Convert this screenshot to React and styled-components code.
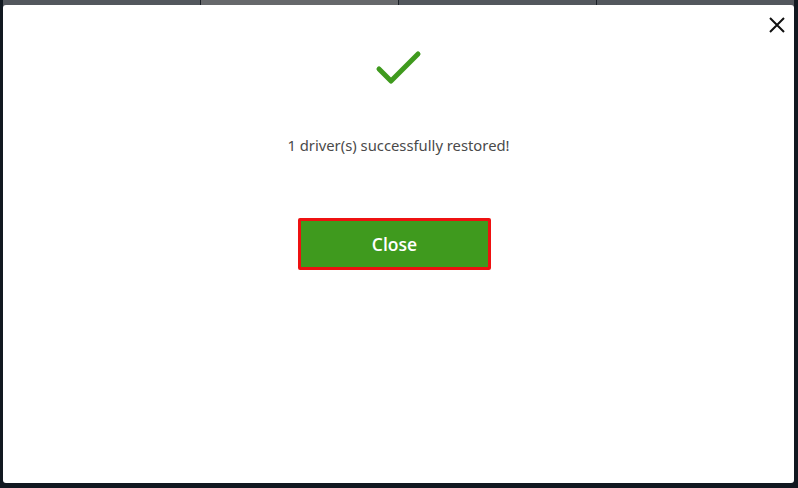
import React from "react";
import styled, { createGlobalStyle } from "styled-components";

const Global = createGlobalStyle`
  html, body { margin: 0; padding: 0; background: #111820; }
  #root { width: 798px; height: 488px; }
`;

const Screen = styled.div`
  width: 798px;
  height: 488px;
  background: #111820;
  display: flex;
  flex-direction: column;
  overflow: hidden;
  padding: 0 4px 5px 3px;
  box-sizing: border-box;
  position: relative;
`;

const TabStrip = styled.div`
  position: absolute;
  top: 0;
  left: 3px;
  right: 4px;
  height: 8px;
  display: flex;
`;

const Tab = styled.div`
  flex: 1;
  background: ${(p) => (p.$active ? "#66686b" : "#53575d")};
  border-left: ${(p) => (p.$first ? "none" : "1px solid #1a1f26")};
`;

const Modal = styled.div`
  position: relative;
  margin-top: 5px;
  flex: 1;
  background: #ffffff;
  border-radius: 3px;
  display: flex;
  flex-direction: column;
  align-items: center;
  font-family: "Segoe UI", "Noto Sans", "Open Sans", sans-serif;
`;

const CloseX = styled.button`
  position: absolute;
  top: 8px;
  right: 5px;
  width: 24px;
  height: 24px;
  padding: 0;
  border: none;
  background: transparent;
  display: flex;
  align-items: center;
  justify-content: center;
  cursor: pointer;
`;

const CheckWrap = styled.div`
  margin-top: 44px;
  height: 40px;
  display: flex;
  align-items: center;
  justify-content: center;
`;

const Message = styled.p`
  margin: 47px 0 0;
  font-size: 14.8px;
  color: #4a4a4a;
  line-height: 18px;
`;

const PrimaryButton = styled.button`
  margin: 64px 8px 0 0;
  width: 193px;
  height: 52px;
  box-sizing: border-box;
  border: 3px solid #ee1111;
  border-radius: 2px;
  background: #3f9a1e;
  color: #ffffff;
  font-family: "Open Sans", "Noto Sans", sans-serif;
  font-size: 17.5px;
  font-weight: 600;
  cursor: pointer;
`;

export default function App() {
  return (
    <>
      <Global />
      <Screen>
        <TabStrip>
          <Tab $first />
          <Tab $active />
          <Tab />
          <Tab />
        </TabStrip>
        <Modal>
          <CloseX aria-label="close">
            <svg width="18" height="18" viewBox="0 0 18 18">
              <path d="M2 2 L16 16 M16 2 L2 16" stroke="#111" strokeWidth="2" />
            </svg>
          </CloseX>
          <CheckWrap>
            <svg width="50" height="40" viewBox="0 0 50 40">
              <path
                d="M5 20 L17 32 L44 5"
                fill="none"
                stroke="#3f9a1e"
                strokeWidth="5"
                strokeLinecap="round"
                strokeLinejoin="round"
              />
            </svg>
          </CheckWrap>
          <Message>1 driver(s) successfully restored!</Message>
          <PrimaryButton>Close</PrimaryButton>
        </Modal>
      </Screen>
    </>
  );
}
